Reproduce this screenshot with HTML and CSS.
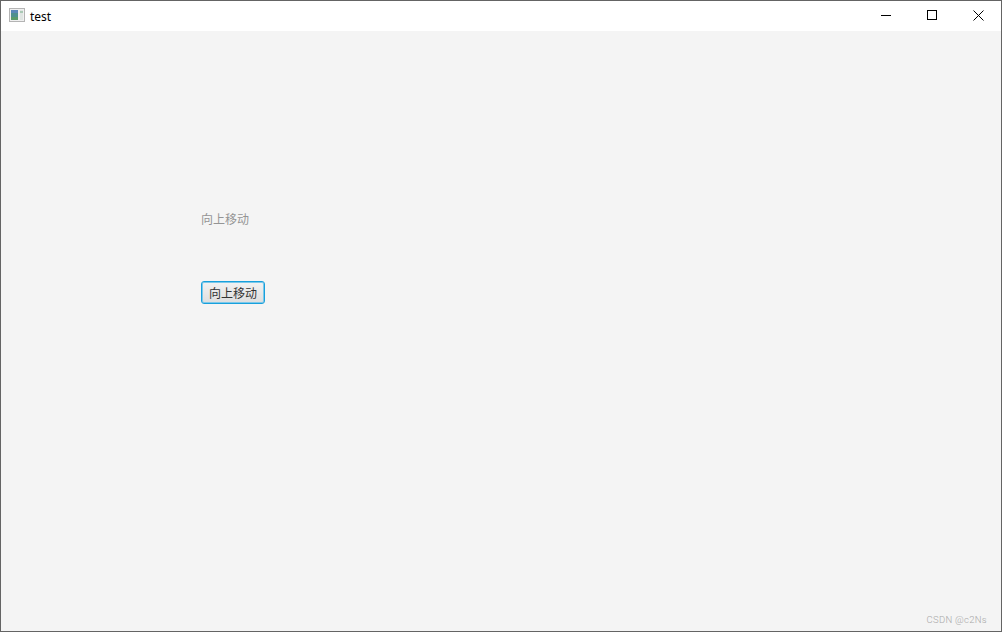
FILE: index.html
```html
<!DOCTYPE html>
<html lang="zh">
<head>
<meta charset="utf-8">
<title>test</title>
<link rel="stylesheet" href="styles.css">
</head>
<body>
<div class="window">
  <header class="titlebar">
    <svg class="app-icon" width="16" height="14" viewBox="0 0 16 14">
      <rect x="0.5" y="0.5" width="15" height="13" fill="#f0f0f0" stroke="#b4b4b4"/>
      <rect x="2" y="2" width="7" height="10" fill="#4f8f8f"/>
      <rect x="2" y="2" width="7" height="3" fill="#5a86b8"/>
      <rect x="2" y="9" width="7" height="3" fill="#5a9a6a"/>
      <rect x="11" y="2" width="3" height="10" fill="#dfe5e2"/>
      <rect x="11" y="3" width="3" height="2" fill="#a9c8b4"/>
    </svg>
    <span class="title">test</span>
    <div class="controls">
      <span class="control"><svg width="10" height="10" viewBox="0 0 10 10"><path d="M0 5.5H10" stroke="#000" fill="none"/></svg></span>
      <span class="control"><svg width="10" height="10" viewBox="0 0 10 10"><rect x="0.5" y="0.5" width="9" height="9" stroke="#000" fill="none"/></svg></span>
      <span class="control"><svg width="11" height="11" viewBox="0 0 11 11"><path d="M0.5 0.5L10.5 10.5M10.5 0.5L0.5 10.5" stroke="#000" fill="none"/></svg></span>
    </div>
  </header>
  <main class="content">
    <div class="label">向上移动</div>
    <button class="button" type="button">向上移动</button>
    <div class="watermark">CSDN @c2Ns</div>
  </main>
</div>
</body>
</html>
```
FILE: styles.css
```css
html, body {
  margin: 0;
  padding: 0;
  height: 100%;
  overflow: hidden;
}
.window {
  box-sizing: border-box;
  width: 1002px;
  height: 632px;
  border: 1px solid #646464;
  display: flex;
  flex-direction: column;
  font-family: "Liberation Sans", "Noto Sans CJK SC", sans-serif;
}
.titlebar {
  height: 30px;
  flex: none;
  background: #fff;
  display: flex;
  align-items: center;
  padding-left: 8px;
}
.app-icon {
  margin-right: 5px;
  margin-top: -2px;
}
.title {
  font-family: "Noto Sans", "Liberation Sans", sans-serif;
  font-size: 12px;
  color: #000;
}
.controls {
  margin-left: auto;
  display: flex;
}
.control {
  width: 46px;
  height: 30px;
  display: flex;
  align-items: center;
  justify-content: center;
  margin-top: -2px;
}
.content {
  flex: 1;
  background: #f4f4f4;
  position: relative;
  padding: 181px 0 0 200px;
  display: flex;
  flex-direction: column;
  align-items: flex-start;
}
.label {
  font-size: 12px;
  line-height: 16px;
  color: #949494;
}
.button {
  margin-top: 53px;
  box-sizing: border-box;
  width: 64px;
  height: 23px;
  padding: 0;
  border: 1px solid #18a0dc;
  border-radius: 3px;
  background: linear-gradient(#f2f2f2, #dedede);
  box-shadow: inset 0 0 0 1px #7cc8ea;
  font-family: inherit;
  font-size: 12px;
  font-weight: 400;
  color: #333;
}
.watermark {
  position: absolute;
  right: 14px;
  bottom: 6px;
  font-family: Roboto, "Liberation Sans", sans-serif;
  font-size: 9.5px;
  font-weight: 300;
  line-height: 11px;
  letter-spacing: 0.3px;
  color: #a8a8a8;
}
```
